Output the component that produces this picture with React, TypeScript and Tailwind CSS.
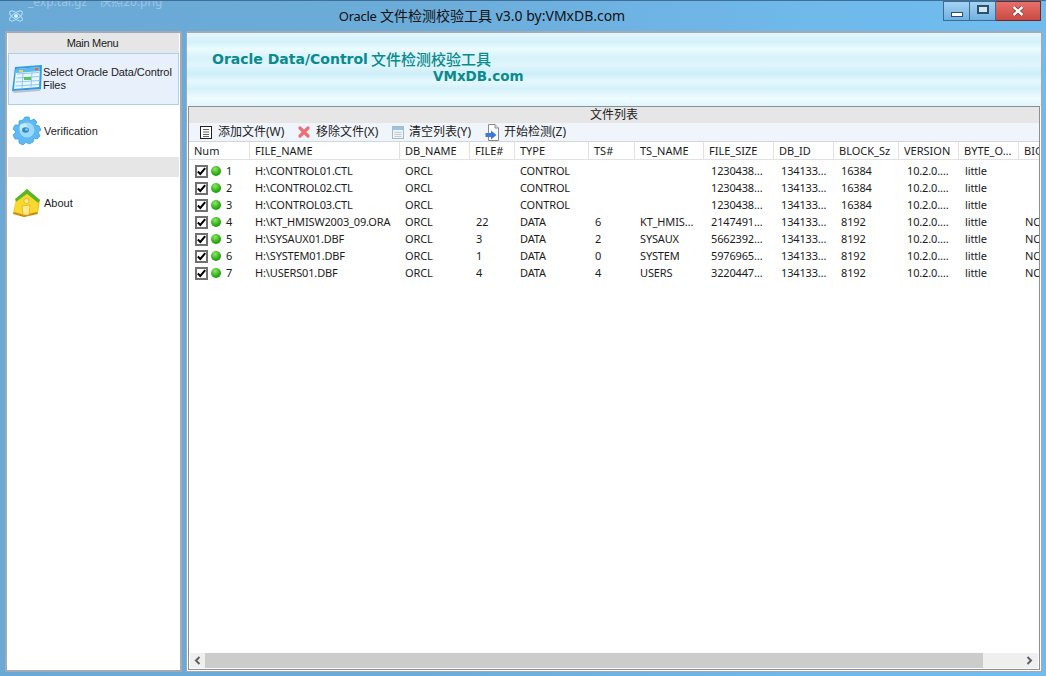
import React from "react";

const COLS = [
  { n: "Num", w: 61, p: 5 },
  { n: "FILE_NAME", w: 150, p: 5 },
  { n: "DB_NAME", w: 70, p: 5 },
  { n: "FILE#", w: 45, p: 6 },
  { n: "TYPE", w: 74, p: 5 },
  { n: "TS#", w: 46, p: 6 },
  { n: "TS_NAME", w: 69, p: 5 },
  { n: "FILE_SIZE", w: 70, p: 7 },
  { n: "DB_ID", w: 60, p: 7 },
  { n: "BLOCK_Sz", w: 65, p: 7 },
  { n: "VERSION", w: 60, p: 8 },
  { n: "BYTE_O…", w: 60, p: 6 },
  { n: "BIG", w: 40, p: 6 },
];

const ROWS = [
  ["1", "H:\\CONTROL01.CTL", "ORCL", "", "CONTROL", "", "", "1230438…", "134133…", "16384", "10.2.0.…", "little", ""],
  ["2", "H:\\CONTROL02.CTL", "ORCL", "", "CONTROL", "", "", "1230438…", "134133…", "16384", "10.2.0.…", "little", ""],
  ["3", "H:\\CONTROL03.CTL", "ORCL", "", "CONTROL", "", "", "1230438…", "134133…", "16384", "10.2.0.…", "little", ""],
  ["4", "H:\\KT_HMISW2003_09.ORA", "ORCL", "22", "DATA", "6", "KT_HMIS…", "2147491…", "134133…", "8192", "10.2.0.…", "little", "NO"],
  ["5", "H:\\SYSAUX01.DBF", "ORCL", "3", "DATA", "2", "SYSAUX", "5662392…", "134133…", "8192", "10.2.0.…", "little", "NO"],
  ["6", "H:\\SYSTEM01.DBF", "ORCL", "1", "DATA", "0", "SYSTEM", "5976965…", "134133…", "8192", "10.2.0.…", "little", "NO"],
  ["7", "H:\\USERS01.DBF", "ORCL", "4", "DATA", "4", "USERS", "3220447…", "134133…", "8192", "10.2.0.…", "little", "NO"],
];

const TableIcon = () => (
  <svg width="32" height="30" viewBox="0 0 32 30" className="shrink-0">
    <path d="M4 3 L31 1 L30 25 L1 27 Z" fill="#2f9be0" />
    <path d="M5 5 L29 3 L28 23 L3 25 Z" fill="#e9f6fd" />
    <path d="M5 5 L29 3 L29 7 L5 9 Z" fill="#5db6ee" />
    <path d="M6 10 L28 8.5 M5.5 14 L28 12.5 M5 18 L28 16.5 M4.5 22 L28 20.5 M12 9 L11 24 M21 8 L20 23" stroke="#8fcbee" strokeWidth="1" fill="none" />
    <rect x="13" y="13" width="7" height="3" fill="#5cc45c" />
    <rect x="8" y="6" width="4" height="2" fill="#f5d24a" />
    <rect x="24" y="4" width="3" height="2" fill="#e8603c" />
    <path d="M1 27 L30 25 L29 27 L3 29 Z" fill="#9aa6ad" opacity="0.6" />
  </svg>
);

const GearIcon = () => (
  <svg width="30" height="30" viewBox="0 0 30 30" className="shrink-0">
    <path
      d="M13 1 L17 1 L18 5 L22 3 L25 6 L23 9 L27 10 L29 14 L26 16 L28 20 L25 23 L22 22 L21 26 L17 28 L14 26 L11 29 L7 27 L7 23 L3 23 L1 19 L4 16 L1 13 L3 9 L7 9 L7 5 L11 4 Z"
      fill="#5dbaf4"
      stroke="#3d9ee0"
      strokeWidth="0.8"
    />
    <circle cx="15" cy="14" r="7.5" fill="#9fd9fa" />
    <circle cx="11.5" cy="11.5" r="4" fill="#d2eefc" opacity="0.8" />
    <ellipse cx="13.5" cy="14" rx="3.4" ry="2.8" fill="#2d86c6" />
    <ellipse cx="14.5" cy="13.5" rx="1.6" ry="1.2" fill="#7cc8f2" />
  </svg>
);

const HouseIcon = () => (
  <svg width="28" height="30" viewBox="0 0 28 30" className="shrink-0">
    <path d="M14 1 L27 12 L25 25 L11 29 L0 25 L3 12 Z" fill="#f2c419" />
    <path d="M14 1 L27 12 L25 15 L14 6 L3 14 L2 11 Z" fill="#58b82c" />
    <path d="M3 14 L14 6 L25 15 L24 24 L11 27 L1 24 Z" fill="#f9d92e" />
    <path d="M1 24 L11 27 L24 24 L25 26 L11 29 L0 26 Z" fill="#c98a16" />
    <circle cx="13.5" cy="13" r="2.6" fill="#fbe98a" stroke="#d9a514" strokeWidth="0.6" />
    <path d="M9 18 L17 17 L16 27 L10 27 Z" fill="#fbe98a" stroke="#d9a514" strokeWidth="0.6" />
  </svg>
);

const AppIcon = () => (
  <svg width="18" height="18" viewBox="0 0 18 18" className="shrink-0">
    <g fill="none" stroke="#a8dcfb" strokeWidth="1">
      <ellipse cx="9" cy="9" rx="7.5" ry="3" transform="rotate(35 9 9)" />
      <ellipse cx="9" cy="9" rx="7.5" ry="3" transform="rotate(-35 9 9)" />
    </g>
    <circle cx="9" cy="9" r="2" fill="#d5f0ff" />
  </svg>
);

const Checkbox = () => (
  <span className="flex h-[13px] w-[13px] shrink-0 items-center justify-center border-2 border-[#707070] bg-white">
    <svg width="9" height="9" viewBox="0 0 9 9">
      <path d="M0.8 4.5 L3.3 7 L8.2 1.2" fill="none" stroke="#000" strokeWidth="2" />
    </svg>
  </span>
);

const Dot = () => (
  <span className="mb-[2px] ml-[3px] block h-[10px] w-[10px] shrink-0 rounded-full bg-[radial-gradient(circle_at_40%_30%,#8fe86a,#2fae16_55%,#167a0c)]" />
);

const AddIcon = () => (
  <svg width="12" height="13" viewBox="0 0 12 13" className="shrink-0">
    <rect x="0.5" y="0.5" width="11" height="12" fill="#fff" stroke="#222" />
    <path d="M3 3.5 H9 M3 6 H9 M3 8.5 H9 M3 10.5 H9" stroke="#666" strokeWidth="1" />
  </svg>
);

const RemoveIcon = () => (
  <svg width="12" height="12" viewBox="0 0 12 12" className="shrink-0">
    <path d="M2 2 L10 10 M10 2 L2 10" stroke="#ec6f78" strokeWidth="3.2" strokeLinecap="round" />
  </svg>
);

const ClearIcon = () => (
  <svg width="12" height="13" viewBox="0 0 12 13" className="shrink-0">
    <rect x="0.5" y="0.5" width="11" height="12" fill="#eef3f7" stroke="#a9b8c6" />
    <rect x="1" y="1" width="10" height="3" fill="#9cc2e6" />
    <path d="M2.5 6.5 H9.5 M2.5 8.5 H9.5 M2.5 10.5 H9.5" stroke="#c4ced8" />
  </svg>
);

const StartIcon = () => (
  <svg width="15" height="17" viewBox="0 0 15 17" className="shrink-0">
    <path d="M3.5 0.5 H10 L13.5 4 V16.5 H3.5 Z" fill="#fff" stroke="#8a8a8a" />
    <path d="M10 0.5 V4 H13.5" fill="#e4e4e4" stroke="#8a8a8a" />
    <path d="M0.5 9 H6 V6.5 L11.5 11 L6 15.5 V13 H0.5 Z" fill="#3f78d8" />
  </svg>
);

function ToolItem({ icon, label, className }: { icon: React.ReactNode; label: string; className: string }) {
  return (
    <div className={`flex items-center text-[12px] ${className}`}>
      {icon}
      <span className="whitespace-nowrap text-[#222]">{label}</span>
    </div>
  );
}

export default function App() {
  return (
    <div
      className="flex h-[676px] w-[1046px] flex-col overflow-hidden border-t border-[#3f6f96] bg-[linear-gradient(90deg,#6aa9d6_0%,#6cacd9_40%,#6fb8ea_75%,#6fbdf0_100%)] text-[11px] text-[#1c1c1c]"
      style={{ fontFamily: '"Noto Sans","Noto Sans CJK SC",sans-serif' }}
    >
      <div className="relative flex h-[30px] shrink-0 items-center">
        <span className="absolute left-[28px] top-[-8px] text-[12px] text-[#9cc6e4]">_exp.tar.gz　快照20.png</span>
        <div className="ml-[7px]">
          <AppIcon />
        </div>
        <div className="flex-1 pr-[4px] text-center text-[14px] leading-[30px] text-[#111]">
          <span className="text-[13px] tracking-[-0.3px]">Oracle</span> 文件检测校验工具 v3.0 by:VMxDB.com
        </div>
        <div className="mb-[9px] mr-[5px] flex h-[21px] self-start">
          <div className="flex h-[20px] w-[27px] items-center justify-center border border-[#3d6c92] bg-[linear-gradient(180deg,#a5d2f2,#6fb1e0)]">
            <span className="mt-[6px] h-[5px] w-[12px] border border-[#2d4f6c] bg-white" />
          </div>
          <div className="flex h-[20px] w-[26px] items-center justify-center border-y border-r border-[#3d6c92] bg-[linear-gradient(180deg,#a5d2f2,#6fb1e0)]">
            <span className="mb-[3px] h-[9px] w-[12px] border-2 border-[#2d4f6c] bg-[#cfe6f6]" />
          </div>
          <div className="flex h-[20px] w-[45px] items-center justify-center border-y border-r border-[#7a2620] bg-[linear-gradient(180deg,#e8706a,#c94a43)]">
            <svg width="14" height="12" viewBox="0 0 14 12">
              <path d="M2.5 2 L11.5 10 M11.5 2 L2.5 10" stroke="#5c2a26" strokeWidth="3.6" />
              <path d="M2.5 2 L11.5 10 M11.5 2 L2.5 10" stroke="#fff" strokeWidth="2.4" />
            </svg>
          </div>
        </div>
      </div>

      <div className="flex h-[641px] shrink-0 pl-[5px] pr-[4px]">
        <aside
          className="flex w-[177px] shrink-0 flex-col border-2 border-[#a4a9b6] bg-white px-[1px]"
          style={{ fontFamily: '"Liberation Sans",sans-serif' }}
        >
          <div className="flex h-[20px] shrink-0 items-center justify-center bg-[#e6e6e6] pr-[2px] tracking-[-0.3px]">Main Menu</div>
          <div className="flex h-[52px] shrink-0 items-center border border-[#a6d2f5] bg-[#e8f0fb] pl-[2px] leading-[13px] tracking-[-0.08px]">
            <TableIcon />
            <span className="w-[134px]">Select Oracle Data/Control Files</span>
          </div>
          <div className="flex h-[52px] shrink-0 items-center pl-[3px]">
            <div className="flex w-[33px] justify-start pl-[1px]">
              <GearIcon />
            </div>
            <span>Verification</span>
          </div>
          <div className="h-[20px] shrink-0 bg-[#e6e6e6]" />
          <div className="flex h-[52px] shrink-0 items-center pl-[3px]">
            <div className="flex w-[33px] justify-start pl-[2px]">
              <HouseIcon />
            </div>
            <span>About</span>
          </div>
        </aside>

        <main className="ml-[4px] flex min-w-0 flex-1 flex-col border border-t-2 border-[#a4a9b6] bg-white">
          <div className="relative h-[73px] shrink-0 overflow-hidden bg-[linear-gradient(180deg,#e4f8fd_0%,#d3f1fa_12%,#ebfbfe_22%,#d6f2fb_34%,#e0f6fc_44%,#cdeef9_56%,#e6f9fd_66%,#d4f1fa_76%,#eefcfe_90%,#e0f6fc_100%)]">
            <div className="absolute left-[25px] top-[16px] flex items-center whitespace-nowrap text-[#0b8a8c]">
              <span className="text-[14px] font-bold leading-[20px]" style={{ fontFamily: '"DejaVu Sans",sans-serif' }}>
                Oracle Data/Control
              </span>
              <span className="ml-[3px] text-[15px] font-medium leading-[20px]" style={{ fontFamily: '"Noto Sans CJK SC",sans-serif' }}>
                文件检测校验工具
              </span>
            </div>
            <div className="absolute left-[246px] top-[34px] text-[13.5px] font-bold leading-[18px] text-[#0b8a8c]" style={{ fontFamily: '"DejaVu Sans",sans-serif' }}>
              VMxDB.com
            </div>
          </div>

          <div className="mx-[1px] mb-[1px] flex min-h-0 flex-1 flex-col border border-[#8a8f98] bg-white pb-[1px]">
            <div className="flex h-[16px] shrink-0 items-center justify-center bg-[#e6e6e6] text-[12px]">文件列表</div>
            <div className="flex h-[19px] shrink-0 items-center border-b border-[#cfd6de] bg-[#f0f5fb] pl-[11px]">
              <ToolItem icon={<AddIcon />} label="添加文件(W)" className="w-[98px] gap-[6px]" />
              <ToolItem icon={<RemoveIcon />} label="移除文件(X)" className="w-[94px] gap-[6px]" />
              <ToolItem icon={<ClearIcon />} label="清空列表(Y)" className="w-[93px] gap-[5px]" />
              <ToolItem icon={<StartIcon />} label="开始检测(Z)" className="w-[100px] gap-[4px]" />
            </div>

            <div className="flex min-h-0 flex-1 flex-col overflow-hidden">
              <div className="flex h-[18px] shrink-0 items-center border-b border-[#e2e2e2]">
                {COLS.map((c, i) => (
                  <div
                    key={c.n}
                    style={{ width: c.w }}
                    className={`flex h-[17px] shrink-0 items-center overflow-hidden whitespace-nowrap pl-[5px] pt-[1px] ${i < COLS.length - 1 ? "border-r border-[#e2e2e2]" : ""}`}
                  >
                    {c.n}
                  </div>
                ))}
              </div>
              <div className="flex-1 overflow-hidden pt-[3px] tracking-[-0.15px]">
                {ROWS.map((r) => (
                  <div key={r[0]} className="flex h-[17px] items-center">
                    {r.map((v, i) =>
                      i === 0 ? (
                        <div key={i} style={{ width: COLS[0].w }} className="flex shrink-0 items-center pl-[6px]">
                          <Checkbox />
                          <Dot />
                          <span className="ml-[5px]">{v}</span>
                        </div>
                      ) : (
                        <div key={i} style={{ width: COLS[i].w, paddingLeft: COLS[i].p }} className="shrink-0 overflow-hidden whitespace-nowrap">
                          {v}
                        </div>
                      ),
                    )}
                  </div>
                ))}
              </div>
              <div className="ml-[1px] mr-[1px] flex h-[15px] shrink-0 items-center bg-[#efefef]">
                <div className="flex w-[15px] shrink-0 justify-center">
                  <svg width="7" height="9" viewBox="0 0 7 9"><path d="M5.5 1 L2 4.5 L5.5 8" fill="none" stroke="#606060" strokeWidth="2" /></svg>
                </div>
                <div className="h-full w-[778px] shrink-0 bg-[#cccccc]" />
                <div className="flex flex-1 justify-end pr-[5px]">
                  <svg width="7" height="9" viewBox="0 0 7 9"><path d="M1.5 1 L5 4.5 L1.5 8" fill="none" stroke="#606060" strokeWidth="2" /></svg>
                </div>
              </div>
            </div>
          </div>
        </main>
      </div>
    </div>
  );
}
